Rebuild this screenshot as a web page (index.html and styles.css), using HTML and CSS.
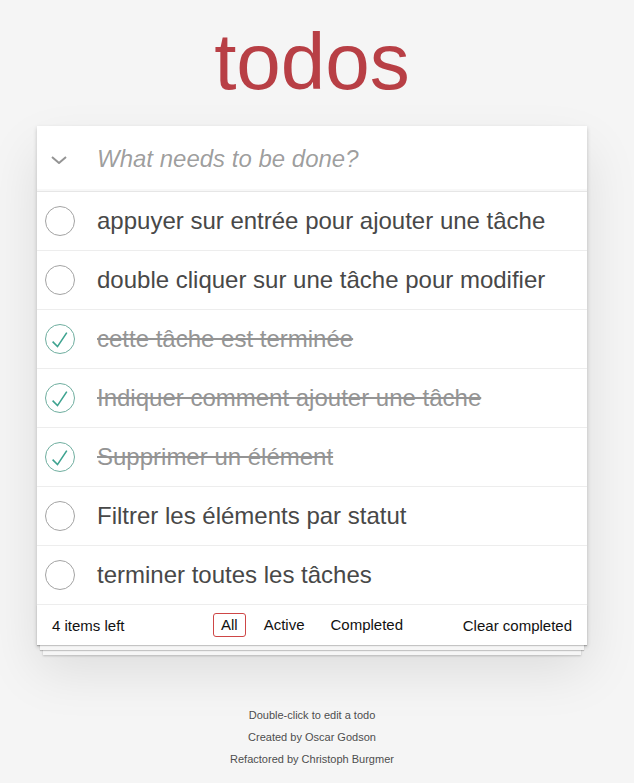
FILE: index.html
```html
<!DOCTYPE html>
<html lang="fr">
<head>
<meta charset="utf-8">
<title>todos</title>
<link rel="stylesheet" href="styles.css">
</head>
<body>
<div class="page">
  <h1 class="title">todos</h1>
  <section class="todoapp">
    <header class="new-row">
      <span class="toggle-all">
        <svg width="16" height="8" viewBox="0 0 16 8"><polyline points="1,1 8,7 15,1" fill="none" stroke="#949494" stroke-width="2"/></svg>
      </span>
      <span class="new-todo">What needs to be done?</span>
    </header>
    <ul class="todo-list">
      <li class="item">
        <span class="toggle"><svg width="30" height="30" viewBox="0 0 30 30"><circle cx="15" cy="15" r="14.5" fill="none" stroke="#a3a3a3" stroke-width="1"/></svg></span>
        <span class="label">appuyer sur entrée pour ajouter une tâche</span>
      </li>
      <li class="item">
        <span class="toggle"><svg width="30" height="30" viewBox="0 0 30 30"><circle cx="15" cy="15" r="14.5" fill="none" stroke="#a3a3a3" stroke-width="1"/></svg></span>
        <span class="label">double cliquer sur une tâche pour modifier</span>
      </li>
      <li class="item done">
        <span class="toggle"><svg width="30" height="30" viewBox="0 0 30 30"><circle cx="15" cy="15" r="14.5" fill="none" stroke="#6fae9f" stroke-width="1"/><polyline points="7.6,17.6 12.5,22.6 21.8,8.6" fill="none" stroke="#3ea390" stroke-width="1.6"/></svg></span>
        <span class="label">cette tâche est terminée</span>
      </li>
      <li class="item done">
        <span class="toggle"><svg width="30" height="30" viewBox="0 0 30 30"><circle cx="15" cy="15" r="14.5" fill="none" stroke="#6fae9f" stroke-width="1"/><polyline points="7.6,17.6 12.5,22.6 21.8,8.6" fill="none" stroke="#3ea390" stroke-width="1.6"/></svg></span>
        <span class="label">Indiquer comment ajouter une tâche</span>
      </li>
      <li class="item done">
        <span class="toggle"><svg width="30" height="30" viewBox="0 0 30 30"><circle cx="15" cy="15" r="14.5" fill="none" stroke="#6fae9f" stroke-width="1"/><polyline points="7.6,17.6 12.5,22.6 21.8,8.6" fill="none" stroke="#3ea390" stroke-width="1.6"/></svg></span>
        <span class="label">Supprimer un élément</span>
      </li>
      <li class="item">
        <span class="toggle"><svg width="30" height="30" viewBox="0 0 30 30"><circle cx="15" cy="15" r="14.5" fill="none" stroke="#a3a3a3" stroke-width="1"/></svg></span>
        <span class="label">Filtrer les éléments par statut</span>
      </li>
      <li class="item">
        <span class="toggle"><svg width="30" height="30" viewBox="0 0 30 30"><circle cx="15" cy="15" r="14.5" fill="none" stroke="#a3a3a3" stroke-width="1"/></svg></span>
        <span class="label">terminer toutes les tâches</span>
      </li>
    </ul>
    <footer class="footer">
      <span class="count">4 items left</span>
      <ul class="filters">
        <li><a class="filter selected">All</a></li>
        <li><a class="filter">Active</a></li>
        <li><a class="filter">Completed</a></li>
      </ul>
      <span class="clear">Clear completed</span>
    </footer>
  </section>
  <footer class="info">
    <p>Double-click to edit a todo</p>
    <p>Created by Oscar Godson</p>
    <p>Refactored by Christoph Burgmer</p>
  </footer>
</div>
</body>
</html>
```

FILE: styles.css
```css
html, body {
  margin: 0;
  padding: 0;
}
body {
  background: #f5f5f5;
  font-family: "Liberation Sans", Arial, sans-serif;
  font-size: 14px;
  color: #111;
  display: flex;
  justify-content: center;
  padding-right: 10px;
}
.page {
  width: 550px;
}
.title {
  margin: 22px 0 24px;
  height: 80px;
  font-size: 80px;
  line-height: 80px;
  font-weight: normal;
  text-align: center;
  color: #b83f45;
}
.todoapp {
  background: #fff;
  box-shadow: 0 2px 4px 0 rgba(0,0,0,0.2), 0 25px 50px 0 rgba(0,0,0,0.1);
}
.new-row {
  display: flex;
  align-items: center;
  height: 65px;
  box-shadow: inset 0 -2px 1px rgba(0,0,0,0.03);
}
.toggle-all {
  width: 60px;
  flex: none;
  display: flex;
  padding-left: 14px;
  box-sizing: border-box;
  margin-top: 3px;
}
.toggle-all svg { display: block; }
.new-todo {
  font-size: 24px;
  font-style: italic;
  color: rgba(0,0,0,0.4);
  line-height: 28px;
}
.todo-list {
  list-style: none;
  margin: 0;
  padding: 0;
  border-top: 1px solid #e6e6e6;
}
.item {
  display: flex;
  align-items: center;
  border-bottom: 1px solid #ededed;
  height: 58px;
}
.toggle {
  width: 60px;
  flex: none;
  display: flex;
  padding-left: 8px;
  box-sizing: border-box;
}
.toggle svg { display: block; }
.label {
  font-size: 24px;
  line-height: 28px;
  color: #484848;
}
.done .label {
  color: #949494;
  text-decoration: line-through;
}
.footer {
  display: grid;
  grid-template-columns: 1fr auto 1fr;
  align-items: center;
  height: 40px;
  padding: 0 15px;
  font-size: 15px;
  color: #111;
  box-shadow: 0 1px 1px rgba(0,0,0,0.2), 0 8px 0 -3px #f6f6f6, 0 9px 1px -3px rgba(0,0,0,0.2), 0 16px 0 -6px #f6f6f6, 0 17px 2px -6px rgba(0,0,0,0.2);
}
.count { justify-self: start; }
.clear { justify-self: end; }
.filters {
  list-style: none;
  margin: 0;
  padding: 0;
  display: flex;
  gap: 4px;
}
.filter {
  display: block;
  margin: 3px;
  padding: 3px 7px;
  line-height: 16px;
  border: 1px solid transparent;
  border-radius: 3px;
}
.filter.selected {
  border-color: #ce4646;
}
.info {
  margin-top: 65px;
  color: #4d4d4d;
  font-size: 11px;
  text-align: center;
  text-shadow: 0 1px 0 rgba(255,255,255,0.5);
}
.info p {
  margin: 0 0 11px;
  line-height: 1;
}
```
